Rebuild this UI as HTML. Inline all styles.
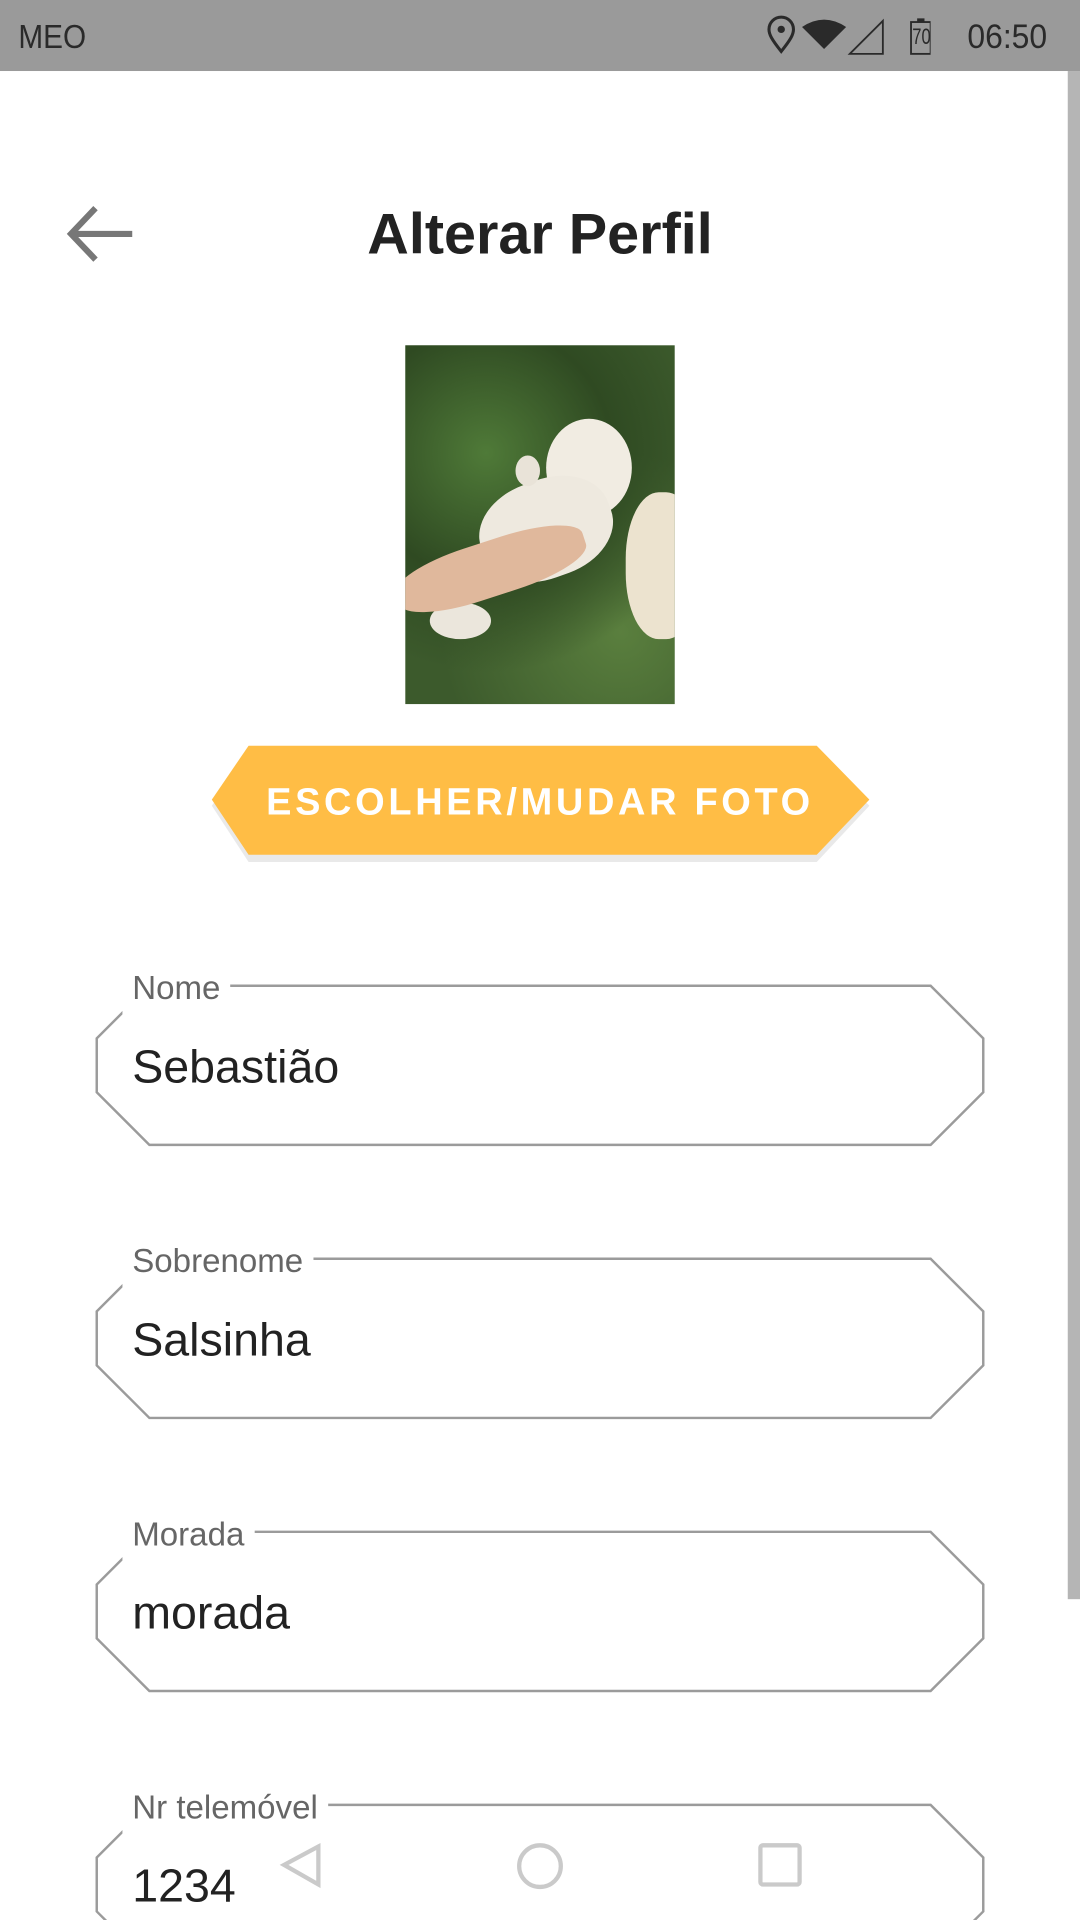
<!DOCTYPE html>
<html><head><meta charset="utf-8"><style>
html,body{margin:0;padding:0;width:1080px;height:1920px;overflow:hidden;background:#fff}
#s{position:absolute;left:0;top:0;width:882px;height:1568px;transform:scale(1.22449);transform-origin:0 0;font-family:"Liberation Sans",sans-serif}
.abs{position:absolute}
.lbl{position:absolute;left:100px;padding:0 8px;background:#fff;color:#666;font-size:27px;line-height:30px}
.val{position:absolute;left:108px;color:#222;font-size:38px;line-height:40px}
</style></head><body><div id="s">
<div class="abs" style="left:0;top:0;width:882px;height:58px;background:#9a9a9a"></div>
<div class="abs" style="left:15px;top:15px;font-size:27px;color:#2a2a2a;transform:scaleX(0.9);transform-origin:0 0">MEO</div>
<svg class="abs" style="left:620px;top:12px" width="140" height="34" viewBox="0 0 140 34">
<path d="M18 30 C10 20 8 16 8 12 A10 10 0 0 1 28 12 C28 16 26 20 18 30Z" fill="none" stroke="#2a2a2a" stroke-width="2.5"/><circle cx="18" cy="12" r="3" fill="#2a2a2a"/>
<path d="M35 10 Q53 -2 71 10 L53 28Z" fill="#2a2a2a"/>
<path d="M74 32 L101 32 L101 5Z" fill="none" stroke="#2a2a2a" stroke-width="1.5"/>
<rect x="124" y="6" width="16" height="26" fill="none" stroke="#2a2a2a" stroke-width="1.5"/><rect x="129" y="3" width="6" height="3" fill="#2a2a2a"/>
</svg>
<div class="abs" style="left:745px;top:20px;font-size:18px;color:#2a2a2a;transform:scaleX(0.75);transform-origin:0 0">70</div>
<div class="abs" style="left:790px;top:14px;font-size:28px;color:#2a2a2a;transform:scaleX(0.93);transform-origin:0 0">06:50</div>
<div class="abs" style="left:872px;top:58px;width:10px;height:1248px;background:#b5b5b5"></div>

<svg class="abs" style="left:50px;top:160px" width="64" height="64" viewBox="0 0 64 64"><path d="M58 31 H10 M28 10 L8 31 L28 52" fill="none" stroke="#777" stroke-width="5"/></svg>
<div class="abs" style="left:0;width:882px;top:163px;text-align:center;font-size:47px;font-weight:bold;color:#222">Alterar Perfil</div>

<div class="abs" style="left:331px;top:282px;width:220px;height:293px;overflow:hidden;background:#3c5a2c">
 <div class="abs" style="left:0;top:0;width:220px;height:293px;background:radial-gradient(circle at 30% 30%,#4f7a38 0,#2f4a22 40%,transparent 70%),radial-gradient(circle at 80% 80%,#5a7f3e 0,transparent 50%)"></div>
 <div class="abs" style="left:115px;top:60px;width:70px;height:80px;border-radius:50%;background:#f1ece2"></div>
 <div class="abs" style="left:60px;top:110px;width:110px;height:80px;border-radius:45%;background:#eee9df;transform:rotate(-20deg)"></div>
 <div class="abs" style="left:20px;top:210px;width:50px;height:30px;border-radius:50%;background:#ebe6dc"></div>
 <div class="abs" style="left:-10px;top:160px;width:160px;height:45px;border-radius:40%;background:#e0b89c;transform:rotate(-18deg)"></div>
 <div class="abs" style="left:180px;top:120px;width:60px;height:120px;border-radius:45%;background:#ece3cf"></div>
 <div class="abs" style="left:90px;top:90px;width:20px;height:25px;border-radius:50%;background:#e9e3d8"></div>
</div>

<svg class="abs" style="left:170px;top:606px" width="545" height="100" viewBox="0 0 545 100">
<polygon points="3,49 33,6 497,6 540,49 497,95 33,95" fill="#c8c8c8" opacity="0.4" transform="translate(0,3)"/>
<polygon points="3,47 33,3 497,3 540,47 497,92 33,92" fill="#ffbd45"/>
</svg>
<div class="abs" style="left:0;width:882px;top:637px;text-align:center;font-size:31px;font-weight:bold;color:#fff;letter-spacing:3px">ESCOLHER/MUDAR FOTO</div>

<svg class="abs" style="left:0;top:0" width="882" height="1568">
<g fill="none" stroke="#9b9b9b" stroke-width="2">
<polygon points="122,805 760,805 803,848 803,892 760,935 122,935 79,892 79,848"/>
<polygon points="122,1028 760,1028 803,1071 803,1115 760,1158 122,1158 79,1115 79,1071"/>
<polygon points="122,1251 760,1251 803,1294 803,1338 760,1381 122,1381 79,1338 79,1294"/>
<polygon points="122,1474 760,1474 803,1517 803,1561 760,1604 122,1604 79,1561 79,1517"/>
</g></svg>
<div class="lbl" style="top:792px;height:38px">Nome</div>
<div class="val" style="top:852px">Sebastião</div>
<div class="lbl" style="top:1015px;height:38px">Sobrenome</div>
<div class="val" style="top:1075px">Salsinha</div>
<div class="lbl" style="top:1238px;height:38px">Morada</div>
<div class="val" style="top:1298px">morada</div>
<div class="lbl" style="top:1461px;height:38px">Nr telemóvel</div>
<div class="val" style="top:1521px">1234</div>

<svg class="abs" style="left:0;top:1495px" width="882" height="60">
<g fill="none" stroke="#cacaca" stroke-width="3.5">
<path d="M260 13 L232 28 L260 44Z"/>
<circle cx="441" cy="29" r="17"/>
<rect x="621" y="12" width="32" height="32" rx="2"/>
</g></svg>
</div></body></html>
